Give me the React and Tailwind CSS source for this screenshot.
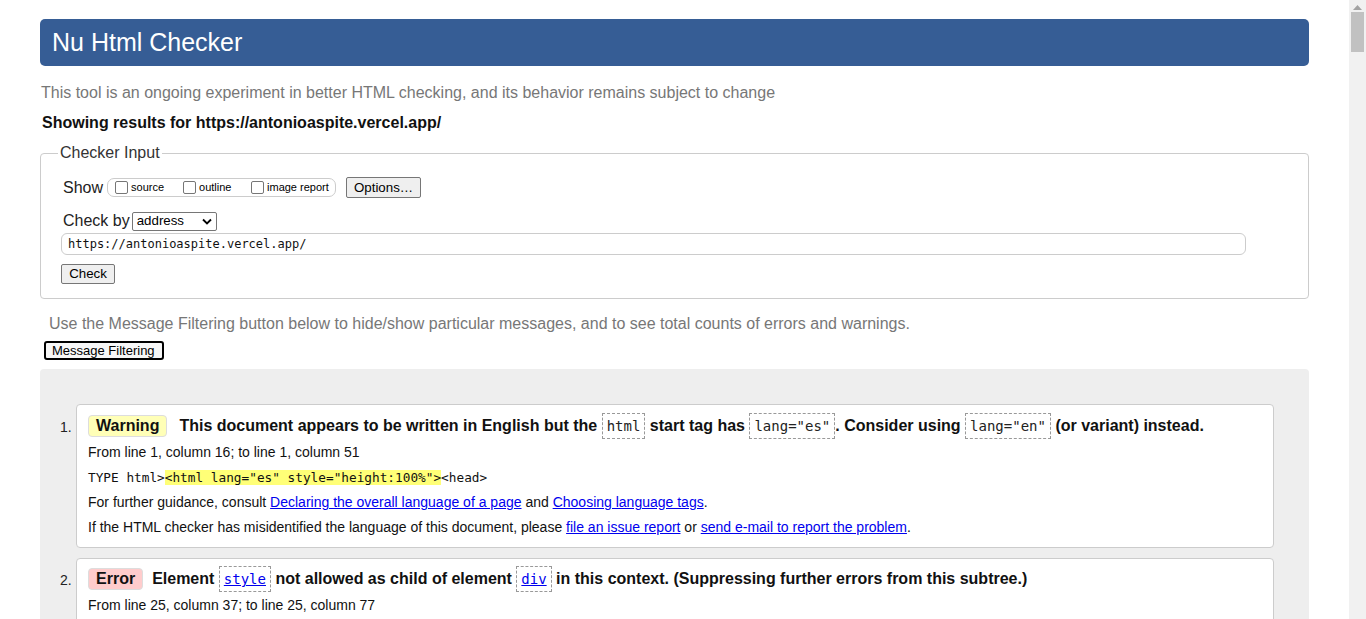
import React from "react";

const mono = "font-['DejaVu_Sans_Mono','Liberation_Mono',monospace]";

function Code({ children, link }) {
  return (
    <code
      className={`${mono} inline-block border border-dashed border-[#999] px-[4px] py-[2px] text-[14px] font-normal leading-[20px] ${
        link ? "text-[#0000ee] underline" : "text-[#222]"
      }`}
    >
      {children}
    </code>
  );
}

function Link({ children }) {
  return <a className="text-[#0000ee] underline">{children}</a>;
}

function Checkbox({ label }) {
  return (
    <span className="flex items-center">
      <span className="mr-[3px] h-[13px] w-[13px] rounded-[2px] border border-[#767676] bg-white" />
      <span className="text-[11px] text-[#000]">{label}</span>
    </span>
  );
}

export default function App() {
  return (
    <div className="flex h-[619px] w-[1366px] overflow-hidden bg-white font-['Liberation_Sans',Arial,sans-serif] text-[#000]">
      <div className="w-[1349px] shrink-0 px-[40px] pt-[19px]">
        <h1 className="h-[47px] rounded-[5px] bg-[#365d95] pl-[12px] text-[25px] leading-[47px] text-white">
          Nu Html Checker
        </h1>
        <p className="ml-[1px] mt-[18px] text-[16px] leading-[18px] text-[#777]">
          This tool is an ongoing experiment in better HTML checking, and its behavior remains subject to change
        </p>
        <p className="ml-[2px] mt-[12px] text-[16px] font-bold leading-[18px] text-[#111]">
          Showing results for https://antonioaspite.vercel.app/
        </p>

        <fieldset className="mt-[12px] rounded-[4px] border border-[#ccc] pb-[14px] pl-[22px]">
          <legend className="ml-[-5px] px-[2px] text-[16px] leading-[18px] text-[#333]">Checker Input</legend>
          <div className="mt-[15px] flex h-[21px] items-center">
            <span className="text-[16px] leading-[18px] text-[#222]">Show</span>
            <span className="ml-[4px] flex h-[19px] w-[229px] items-center rounded-[7px] border border-[#ccc] pl-[7px]">
              <span className="w-[68px]">
                <Checkbox label="source" />
              </span>
              <span className="w-[68px]">
                <Checkbox label="outline" />
              </span>
              <Checkbox label="image report" />
            </span>
            <button className="ml-[10px] h-[21px] w-[75px] rounded-[2px] border border-[#767676] bg-[#efefef] text-[13.3px] leading-[19px] text-[#000]">
              Options…
            </button>
          </div>
          <div className="mt-[14px] flex h-[18px] items-center">
            <span className="text-[16px] leading-[18px] text-[#222]">Check by</span>
            <span className="ml-[2px] flex h-[19px] w-[85px] items-center justify-between rounded-[2px] border border-[#767676] bg-white pl-[4px] pr-[4px] text-[13.3px] text-[#000]">
              <span>address</span>
              <svg width="10" height="7" viewBox="0 0 10 7">
                <path d="M1 1.5 L5 5.5 L9 1.5" fill="none" stroke="#000" strokeWidth="1.8" />
              </svg>
            </span>
          </div>
          <div
            className={`${mono} ml-[-2px] mt-[3px] flex h-[22px] w-[1185px] items-center rounded-[6px] border border-[#ccc] pl-[6px] text-[12px] text-[#111]`}
          >
            https://antonioaspite.vercel.app/
          </div>
          <button className="ml-[-2px] mt-[9px] block h-[20px] w-[54px] rounded-[2px] border border-[#767676] bg-[#efefef] text-[13.3px] leading-[18px] text-[#000]">
            Check
          </button>
        </fieldset>

        <p className="ml-[9px] mt-[16px] text-[16px] leading-[18px] text-[#777]">
          Use the Message Filtering button below to hide/show particular messages, and to see total counts of errors and warnings.
        </p>
        <button className="ml-[4px] mt-[8px] block h-[19px] w-[120px] rounded-[3px] border-2 border-[#000] bg-[#f7f7f7] pl-[6px] text-left text-[13px] leading-[15px] text-[#000]">
          Message Filtering
        </button>

        <div className="mt-[9px] h-[300px] rounded-t-[4px] bg-[#eee] pl-[36px] pr-[35px] pt-[35px]">
          <ol className="flex flex-col gap-[10px]">
            <li className="relative rounded-[4px] border border-[#ccc] bg-white pb-[7px] pl-[11px] pt-[8px]">
              <span className="absolute left-[-17px] top-[14px] text-[14px] leading-[16px] text-[#222]">1.</span>
              <div className="flex items-center text-[16px] font-bold leading-[26px] text-[#111]">
                <span className="mr-[12px] inline-block h-[22px] rounded-[4px] border border-[#ddd] bg-[#ffffb7] px-[7px] text-[16px] leading-[20px]">
                  Warning
                </span>
                <span>
                  This document appears to be written in English but the <Code>html</Code> start tag has{" "}
                  <Code>lang="es"</Code>. Consider using <Code>lang="en"</Code> (or variant) instead.
                </span>
              </div>
              <p className="mt-[1px] text-[14px] leading-[25px] text-[#111]">From line 1, column 16; to line 1, column 51</p>
              <p className={`${mono} text-[12.75px] leading-[25px] text-[#111]`}>
                TYPE html&gt;<span className="bg-[#ffff77]">&lt;html lang="es" style="height:100%"&gt;</span>&lt;head&gt;
              </p>
              <p className="text-[14px] leading-[25px] text-[#111]">
                For further guidance, consult <Link>Declaring the overall language of a page</Link> and{" "}
                <Link>Choosing language tags</Link>.
              </p>
              <p className="text-[14px] leading-[25px] text-[#111]">
                If the HTML checker has misidentified the language of this document, please <Link>file an issue report</Link> or{" "}
                <Link>send e-mail to report the problem</Link>.
              </p>
            </li>
            <li className="relative rounded-[4px] border border-[#ccc] bg-white pb-[9px] pl-[11px] pt-[7px]">
              <span className="absolute left-[-17px] top-[13px] text-[14px] leading-[16px] text-[#222]">2.</span>
              <div className="flex items-center text-[16px] font-bold leading-[26px] text-[#111]">
                <span className="mr-[9px] inline-block h-[22px] rounded-[4px] border border-[#ddd] bg-[#ffcccc] px-[7px] text-[16px] leading-[20px]">
                  Error
                </span>
                <span>
                  Element <Code link>style</Code> not allowed as child of element <Code link>div</Code> in this context. (Suppressing further errors from this subtree.)
                </span>
              </div>
              <p className="mt-[1px] text-[14px] leading-[25px] text-[#111]">From line 25, column 37; to line 25, column 77</p>
              <div className="mt-[2px] h-[40px] w-[450px] border border-dashed border-[#999]" />
            </li>
          </ol>
        </div>
      </div>
      <div className="flex w-[17px] shrink-0 flex-col items-center bg-[#f1f1f1]">
        <svg className="mt-[5px]" width="9" height="5" viewBox="0 0 9 5">
          <path d="M0 5 L4.5 0 L9 5 Z" fill="#a3a3a3" />
        </svg>
        <div className="mt-[2px] h-[40px] w-[13px] bg-[#c1c1c1]" />
      </div>
    </div>
  );
}
